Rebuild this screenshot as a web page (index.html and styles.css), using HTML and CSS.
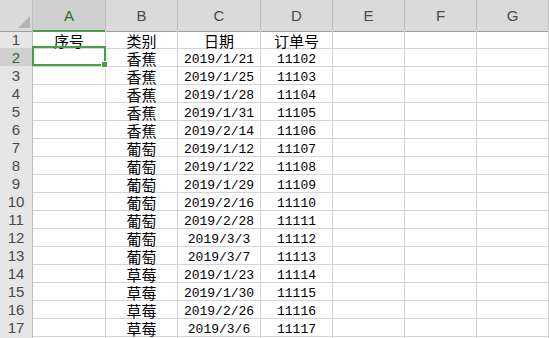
FILE: index.html
```html
<!DOCTYPE html>
<html lang="zh-CN">
<head>
    <meta charset="UTF-8">
    <meta name="viewport" content="width=device-width, initial-scale=1.0">
    <title>订单表</title>
    <link rel="stylesheet" href="styles.css">
</head>
<body>
    <div class="sheet">
        <div class="row head">
            <div class="corner"><span class="tri"></span></div>
            <div class="colhead active">A</div>
            <div class="colhead">B</div>
            <div class="colhead">C</div>
            <div class="colhead">D</div>
            <div class="colhead">E</div>
            <div class="colhead">F</div>
            <div class="colhead">G</div>
        </div>
        <div class="row">
            <div class="rowhead">1</div>
            <div class="cell">序号</div><div class="cell">类别</div><div class="cell">日期</div><div class="cell">订单号</div>
            <div class="cell"></div><div class="cell"></div><div class="cell"></div>
        </div>
        <div class="row">
            <div class="rowhead active">2</div>
            <div class="cell"></div><div class="cell">香蕉</div><div class="cell num">2019/1/21</div><div class="cell num">11102</div>
            <div class="cell"></div><div class="cell"></div><div class="cell"></div>
        </div>
        <div class="row">
            <div class="rowhead">3</div>
            <div class="cell"></div><div class="cell">香蕉</div><div class="cell num">2019/1/25</div><div class="cell num">11103</div>
            <div class="cell"></div><div class="cell"></div><div class="cell"></div>
        </div>
        <div class="row">
            <div class="rowhead">4</div>
            <div class="cell"></div><div class="cell">香蕉</div><div class="cell num">2019/1/28</div><div class="cell num">11104</div>
            <div class="cell"></div><div class="cell"></div><div class="cell"></div>
        </div>
        <div class="row">
            <div class="rowhead">5</div>
            <div class="cell"></div><div class="cell">香蕉</div><div class="cell num">2019/1/31</div><div class="cell num">11105</div>
            <div class="cell"></div><div class="cell"></div><div class="cell"></div>
        </div>
        <div class="row">
            <div class="rowhead">6</div>
            <div class="cell"></div><div class="cell">香蕉</div><div class="cell num">2019/2/14</div><div class="cell num">11106</div>
            <div class="cell"></div><div class="cell"></div><div class="cell"></div>
        </div>
        <div class="row">
            <div class="rowhead">7</div>
            <div class="cell"></div><div class="cell">葡萄</div><div class="cell num">2019/1/12</div><div class="cell num">11107</div>
            <div class="cell"></div><div class="cell"></div><div class="cell"></div>
        </div>
        <div class="row">
            <div class="rowhead">8</div>
            <div class="cell"></div><div class="cell">葡萄</div><div class="cell num">2019/1/22</div><div class="cell num">11108</div>
            <div class="cell"></div><div class="cell"></div><div class="cell"></div>
        </div>
        <div class="row">
            <div class="rowhead">9</div>
            <div class="cell"></div><div class="cell">葡萄</div><div class="cell num">2019/1/29</div><div class="cell num">11109</div>
            <div class="cell"></div><div class="cell"></div><div class="cell"></div>
        </div>
        <div class="row">
            <div class="rowhead">10</div>
            <div class="cell"></div><div class="cell">葡萄</div><div class="cell num">2019/2/16</div><div class="cell num">11110</div>
            <div class="cell"></div><div class="cell"></div><div class="cell"></div>
        </div>
        <div class="row">
            <div class="rowhead">11</div>
            <div class="cell"></div><div class="cell">葡萄</div><div class="cell num">2019/2/28</div><div class="cell num">11111</div>
            <div class="cell"></div><div class="cell"></div><div class="cell"></div>
        </div>
        <div class="row">
            <div class="rowhead">12</div>
            <div class="cell"></div><div class="cell">葡萄</div><div class="cell num">2019/3/3</div><div class="cell num">11112</div>
            <div class="cell"></div><div class="cell"></div><div class="cell"></div>
        </div>
        <div class="row">
            <div class="rowhead">13</div>
            <div class="cell"></div><div class="cell">葡萄</div><div class="cell num">2019/3/7</div><div class="cell num">11113</div>
            <div class="cell"></div><div class="cell"></div><div class="cell"></div>
        </div>
        <div class="row">
            <div class="rowhead">14</div>
            <div class="cell"></div><div class="cell">草莓</div><div class="cell num">2019/1/23</div><div class="cell num">11114</div>
            <div class="cell"></div><div class="cell"></div><div class="cell"></div>
        </div>
        <div class="row">
            <div class="rowhead">15</div>
            <div class="cell"></div><div class="cell">草莓</div><div class="cell num">2019/1/30</div><div class="cell num">11115</div>
            <div class="cell"></div><div class="cell"></div><div class="cell"></div>
        </div>
        <div class="row">
            <div class="rowhead">16</div>
            <div class="cell"></div><div class="cell">草莓</div><div class="cell num">2019/2/26</div><div class="cell num">11116</div>
            <div class="cell"></div><div class="cell"></div><div class="cell"></div>
        </div>
        <div class="row">
            <div class="rowhead">17</div>
            <div class="cell"></div><div class="cell">草莓</div><div class="cell num">2019/3/6</div><div class="cell num">11117</div>
            <div class="cell"></div><div class="cell"></div><div class="cell"></div>
        </div>
        <div class="row">
            <div class="rowhead"></div>
            <div class="cell"></div><div class="cell"></div><div class="cell"></div><div class="cell"></div>
            <div class="cell"></div><div class="cell"></div><div class="cell"></div>
        </div>

        <div class="selection"><span class="handle"></span></div>
    </div>
</body>
</html>
```

FILE: styles.css
```css
html, body {
    margin: 0;
    padding: 0;
    background-color: #fff;
}

.sheet {
    position: relative;
    width: 549px;
    height: 338px;
    overflow: hidden;
    font-family: "Noto Sans CJK SC", sans-serif;
    color: #000;
}

.row {
    display: grid;
    grid-template-columns: 33px 73px 72px 83px 72px 72px 72px 72px;
    height: 18px;
}

.row.head {
    height: 30px;
}

.row > div {
    box-sizing: border-box;
    border-right: 1px solid #d4d4d4;
    border-bottom: 1px solid #d4d4d4;
}

.corner {
    position: relative;
    background-color: #dadada;
    border-right-color: #bdbdbd !important;
    border-bottom-color: #9f9f9f !important;
}

.tri {
    position: absolute;
    right: 2px;
    bottom: 3px;
    width: 0;
    height: 0;
    border-left: 12px solid transparent;
    border-bottom: 12px solid #b4b4b4;
}

.colhead {
    background-color: #dadada;
    border-right-color: #bdbdbd !important;
    border-bottom-color: #9f9f9f !important;
    font-family: "Liberation Sans", sans-serif;
    font-size: 15px;
    color: #4a4a4a;
    text-align: center;
    line-height: 28px;
    padding-top: 2px;
}

.colhead.active {
    background-color: #d0d0d0;
    border-bottom: 2px solid #45a046 !important;
    color: #2f6b31;
}

.rowhead {
    background-color: #e6e6e6;
    border-right-color: #bdbdbd !important;
    border-bottom-color: #cfcfcf !important;
    font-family: "Liberation Sans", sans-serif;
    font-size: 15px;
    color: #4a4a4a;
    text-align: center;
    line-height: 17px;
    padding-top: 1px;
}

.rowhead.active {
    background-color: #d0d0d0;
    color: #2f6b31;
}

.cell {
    font-size: 15px;
    line-height: 15px;
    padding-top: 3px;
    text-align: center;
    white-space: nowrap;
}

.cell.num {
    font-family: "Liberation Mono", monospace;
    font-size: 13px;
    line-height: 13px;
    padding-top: 5px;
}

.selection {
    position: absolute;
    left: 32px;
    top: 46px;
    width: 74px;
    height: 20px;
    box-sizing: border-box;
    border: 2px solid #45a046;
}

.handle {
    position: absolute;
    right: -4px;
    bottom: -4px;
    width: 5px;
    height: 5px;
    background-color: #45a046;
    border: 1px solid #fff;
}
```
